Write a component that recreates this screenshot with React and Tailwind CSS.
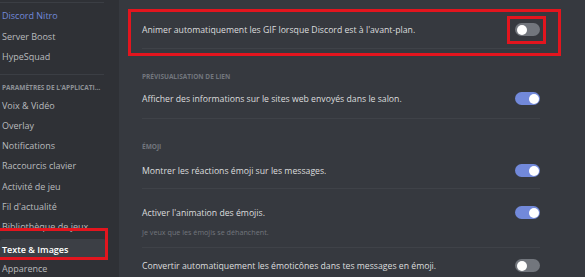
import React from 'react';

const Toggle = ({ on }) => (
  <div className={`w-[25px] h-[13px] rounded-full flex items-center px-[1.5px] shrink-0 ${on ? 'bg-[#7289da] justify-end' : 'bg-[#72767d] justify-start'}`}>
    <div className="w-[10px] h-[10px] rounded-full bg-white" />
  </div>
);

const navTop = ['Server Boost', 'HypeSquad'];
const navApp = [
  'Voix & Vidéo',
  'Overlay',
  'Notifications',
  'Raccourcis clavier',
  'Activité de jeu',
  "Fil d'actualité",
  'Bibliothèque de jeux',
];

const App = () => {
  return (
    <div
      className="w-[585px] h-[277px] overflow-hidden flex bg-[#36393f]"
      style={{ fontFamily: '"Open Sans", "Noto Sans", sans-serif' }}
    >
      {/* sidebar */}
      <aside className="relative w-[119px] shrink-0 bg-[#2f3136] pt-[2px]">
        <div className="h-px w-[104px] bg-[#3b3e44]" />
        <div className="mt-[3px] pl-[2px] pr-[11px] text-[9px]">
          <div className="h-[20.5px] leading-[20.5px] text-[#7289da]">Discord Nitro</div>
          {navTop.map((item) => (
            <div key={item} className="h-[20.5px] leading-[20.5px] text-[#b9bbbe]">{item}</div>
          ))}
        </div>
        <div className="mt-[6px] h-px w-[104px] bg-[#3b3e44]" />
        <div className="mt-[5px] pl-[2px] w-[104px] h-[16px] leading-[16px] text-[6.5px] font-bold uppercase text-[#8e9297] truncate">
          Paramètres de l'application
        </div>
        <div className="pl-[2px] text-[9px]">
          {navApp.map((item) => (
            <div key={item} className="h-[20.3px] leading-[20.3px] text-[#b9bbbe] whitespace-nowrap">{item}</div>
          ))}
          <div className="-ml-[2px] mt-[1px] pl-[2px] w-[106px] h-[20px] leading-[22px] rounded-[3px] bg-[#3c3f45] text-white font-semibold">
            Texte &amp; Images
          </div>
          <div className="h-[20px] leading-[20px] text-[#b9bbbe]">Apparence</div>
        </div>
        <div className="absolute left-[-3px] top-[228px] w-[111px] h-[32px] border-[3px] border-[#e3151e]" />
      </aside>

      {/* main */}
      <main className="relative flex-1 pl-[23px] pr-[45px] pt-[10px] text-[8.7px] text-[#dcddde]">
        <div className="flex items-center justify-between pt-[13px] pb-[12px] border-b border-[#3f4248]">
          <span className="leading-[12px]">Animer automatiquement les GIF lorsque Discord est à l'avant-plan.</span>
          <Toggle on={false} />
        </div>

        <div className="mt-[22px] h-[12px] leading-[12px] text-[6.5px] font-bold uppercase text-[#72767d]">
          Prévisualisation de lien
        </div>
        <div className="flex items-center justify-between pt-[9px] pb-[13px] border-b border-[#3f4248]">
          <span className="leading-[12px]">Afficher des informations sur le sites web envoyés dans le salon.</span>
          <Toggle on />
        </div>

        <div className="mt-[22px] h-[12px] leading-[12px] text-[6.5px] font-bold uppercase text-[#72767d]">
          Émoji
        </div>
        <div className="flex items-center justify-between pt-[11px] pb-[11px] border-b border-[#3f4248]">
          <span className="leading-[12px]">Montrer les réactions émoji sur les messages.</span>
          <Toggle on />
        </div>

        <div className="pt-[17px] pb-[9px] border-b border-[#3f4248]">
          <div className="flex items-center justify-between">
            <span className="leading-[12px]">Activer l'animation des émojis.</span>
            <Toggle on />
          </div>
          <div className="mt-[7px] leading-[12px] text-[7.2px] text-[#72767d]">Je veux que les émojis se déhanchent.</div>
        </div>

        <div className="flex items-center justify-between pt-[11px]">
          <span className="leading-[12px]">Convertir automatiquement les émoticônes dans tes messages en émoji.</span>
          <Toggle on={false} />
        </div>

        <div className="absolute left-[9px] top-[9px] w-[433px] h-[47px] border-[3px] border-[#e3151e]" />
        <div className="absolute left-[388px] top-[16px] w-[39px] h-[28px] border-[3px] border-[#e3151e]" />
      </main>
    </div>
  );
};

export default App;
